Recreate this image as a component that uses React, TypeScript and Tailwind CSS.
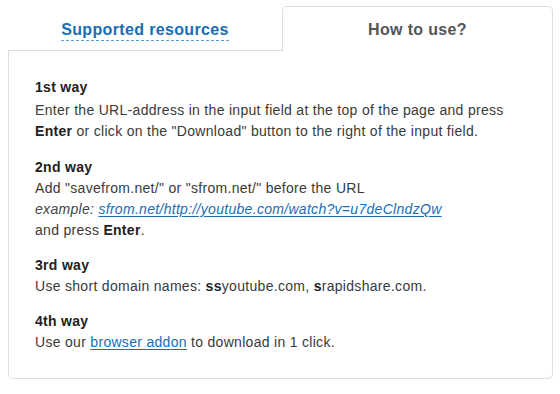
const Way = ({ title, children, first }: { title: string; children: React.ReactNode; first?: boolean }) => (
  <div className={first ? "mb-[15px]" : "mb-[14px] last:mb-0"}>
    <div className={first ? "font-bold text-[#222] mb-[2px]" : "font-bold text-[#222]"}>{title}</div>
    <div>{children}</div>
  </div>
);

const App = () => {
  return (
    <div className="bg-white w-[560px] h-[394px] pt-[6px] pl-2 font-['Liberation_Sans',Arial,sans-serif]">
      <div className="w-[545px]">
        {/* tabs */}
        <div className="flex">
          <div className="w-[274px] h-[45px] border-b border-[#dedede] flex items-center justify-center">
            <span className="text-[16px] leading-[18px] font-bold tracking-[0.35px] text-[#1b6db3] border-b border-dashed border-[#5a9fd6] pb-[1px] mt-[5px]">
              Supported resources
            </span>
          </div>
          <div className="flex-1 h-[45px] border-t border-x border-[#dedede] rounded-t-[5px] flex items-center justify-center">
            <span className="text-[16px] leading-[18px] font-bold tracking-[0.35px] text-[#555] mt-[1px]">How to use?</span>
          </div>
        </div>

        {/* panel */}
        <div className="border-x border-b border-[#dedede] rounded-b-[5px] px-[26px] pt-[26px] pb-[25px] text-[14px] leading-[21px] tracking-[0.3px] text-[#3a3a3a]">
          <Way title="1st way" first>
            Enter the URL-address in the input field at the top of the page and press{" "}
            <b className="text-[#222]">Enter</b> or click on the "Download" button to the right of the input field.
          </Way>
          <Way title="2nd way">
            Add "savefrom.net/" or "sfrom.net/" before the URL
            <br />
            <i className="text-[#444]">example: </i>
            <a href="#" className="italic text-[#1b6db3] underline underline-offset-2">
              sfrom.net/http://youtube.com/watch?v=u7deClndzQw
            </a>
            <br />
            and press <b className="text-[#222]">Enter</b>.
          </Way>
          <Way title="3rd way">
            Use short domain names: <b className="text-[#222]">ss</b>youtube.com, <b className="text-[#222]">s</b>rapidshare.com.
          </Way>
          <Way title="4th way">
            Use our{" "}
            <a href="#" className="text-[#1b6db3] underline underline-offset-2">
              browser addon
            </a>{" "}
            to download in 1 click.
          </Way>
        </div>
      </div>
    </div>
  );
};

export default App;
